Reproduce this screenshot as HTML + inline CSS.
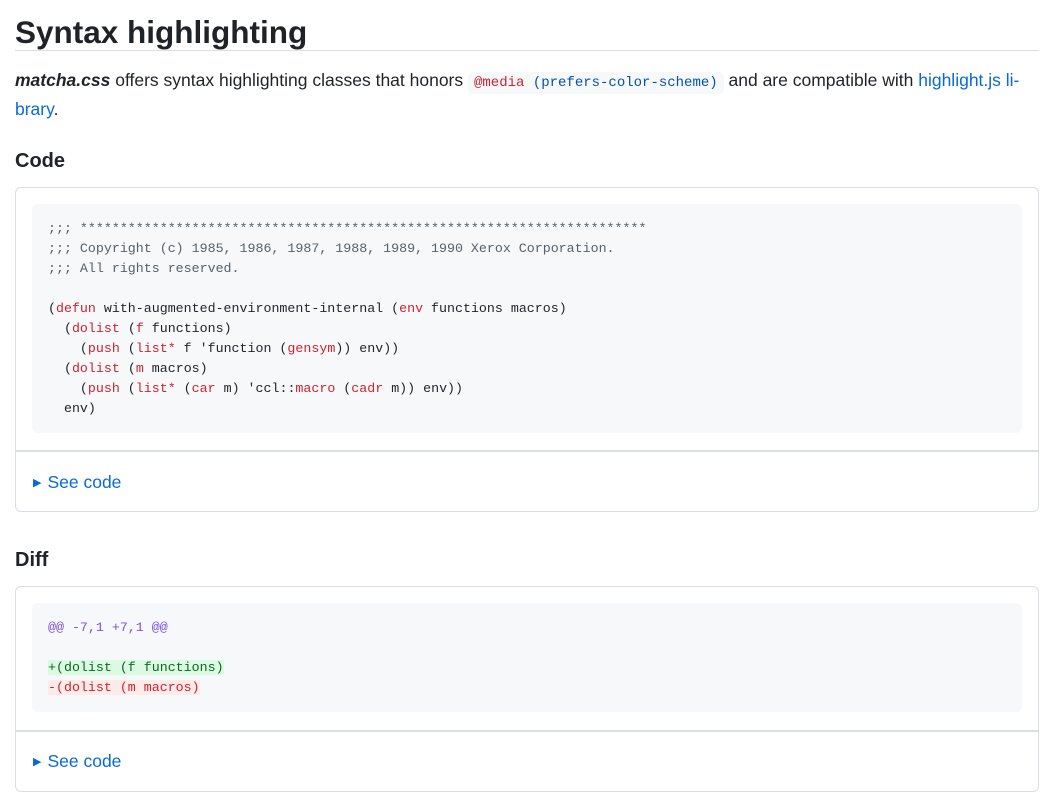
<!DOCTYPE html>
<html><head><meta charset="utf-8"><style>
body{margin:0;background:#fff;color:#1f2328;font-family:"Liberation Sans",sans-serif;}
h1{position:absolute;left:15px;top:10px;margin:0;font-size:31.5px;font-weight:bold;line-height:44px;width:1024px;border-bottom:1px solid #d8dee4;height:40px;}
p{position:absolute;left:15px;top:67px;margin:0;width:1024px;font-size:17.5px;line-height:26px;}
a{color:#0969da;text-decoration:none}
code.i{font-family:"Liberation Mono",monospace;font-size:14px;background:#f6f8fa;border-radius:5px;padding:3px 6px;color:#0550ae}
h3{position:absolute;left:15px;margin:0;font-size:20px;font-weight:bold;line-height:26px}
.box{position:absolute;left:15px;width:1022px;border:1px solid #d8dee4;border-radius:6px;}
pre{position:absolute;left:16px;width:958px;margin:0;background:#f6f8fa;border-radius:6px;padding:15px 16px;font-family:"Liberation Mono",monospace;font-size:13.3px;line-height:20px;color:#1f2328}
.sep{position:absolute;left:0;right:0;height:2px;background:#d8dee4}
.see{position:absolute;left:17px;font-size:17.5px;color:#0969da;line-height:24px}
.see span{font-size:11px;margin-right:6px;vertical-align:2px}
.c{color:#57606a}.k{color:#cf222e}.m{color:#8250df}
.ad{background:#dafbe1;color:#116329}.dl{background:#ffebe9;color:#cf222e}
</style></head><body>
<h1>Syntax highlighting</h1>
<p><b><i>matcha.css</i></b> offers syntax highlighting classes that honors <code class="i"><span style="color:#cf222e">@media</span> (prefers-color-scheme)</code> and are compatible with <a>highlight.js li-<br>brary</a>.</p>
<h3 style="top:148px">Code</h3>
<div class="box" style="top:187px;height:323px">
<pre style="top:16px;height:199px"><span class="c">;;; ***********************************************************************
;;; Copyright (c) 1985, 1986, 1987, 1988, 1989, 1990 Xerox Corporation.
;;; All rights reserved.</span>

(<span class="k">defun</span> with-augmented-environment-internal (<span class="k">env</span> functions macros)
  (<span class="k">dolist</span> (<span class="k">f</span> functions)
    (<span class="k">push</span> (<span class="k">list*</span> f 'function (<span class="k">gensym</span>)) env))
  (<span class="k">dolist</span> (<span class="k">m</span> macros)
    (<span class="k">push</span> (<span class="k">list*</span> (<span class="k">car</span> m) 'ccl::<span class="k">macro</span> (<span class="k">cadr</span> m)) env))
  env)</pre>
<div class="sep" style="top:262px"></div>
<div class="see" style="top:282px"><span>▶</span>See code</div>
</div>
<h3 style="top:547px">Diff</h3>
<div class="box" style="top:586px;height:204px">
<pre style="top:16px;height:79px"><span class="m">@@ -7,1 +7,1 @@</span>

<span class="ad">+(dolist (f functions)</span>
<span class="dl">-(dolist (m macros)</span></pre>
<div class="sep" style="top:143px"></div>
<div class="see" style="top:162px"><span>▶</span>See code</div>
</div>
</body></html>
